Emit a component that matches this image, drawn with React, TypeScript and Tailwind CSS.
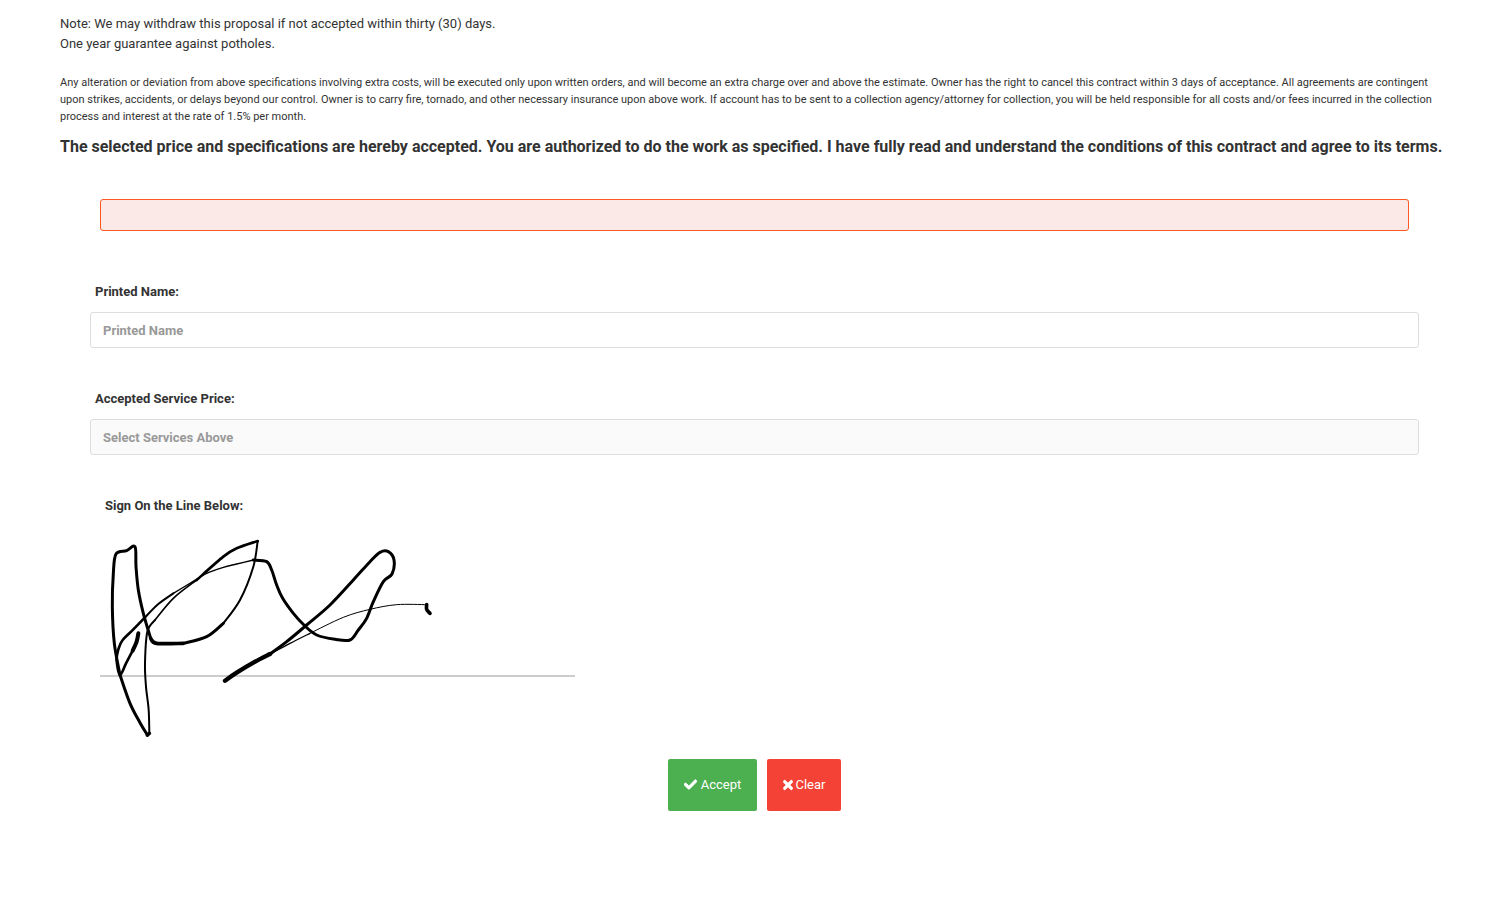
import { FaCheck, FaTimes } from "react-icons/fa";

// signature strokes, coords are 3x page px (svg box starts at 90,530)
type Stroke = { w: number; pts: number[][] };

const STROKES: Stroke[] = [
  { w: 12, pts: [[145, 310], [140, 335], [128, 362]] },
  { w: 8, pts: [[128, 362], [108, 400], [90, 435], [80, 390], [86, 355], [98, 330], [130, 298], [165, 262]] },
  { w: 6, pts: [[165, 262], [205, 222], [250, 190]] },
  { w: 4, pts: [[250, 190], [300, 160], [350, 130], [400, 112], [440, 102], [490, 90]] },
  { w: 9, pts: [[490, 90], [530, 95], [545, 120], [560, 165], [578, 205], [610, 250], [645, 288], [680, 315], [735, 328], [780, 330], [805, 300], [830, 265], [850, 215], [880, 155], [906, 132], [912, 90], [895, 65], [870, 67], [840, 95], [790, 150], [720, 225], [650, 285], [590, 335], [540, 372]] },
  { w: 13, pts: [[540, 372], [490, 398], [440, 428], [405, 452]] },
  { w: 4, pts: [[540, 372], [600, 340], [660, 310]] },
  { w: 3, pts: [[660, 310], [760, 262], [840, 238], [920, 224], [1010, 224]] },
  { w: 11, pts: [[1010, 224], [1010, 238], [1020, 250]] },
  { w: 9, pts: [[90, 435], [120, 520], [150, 578], [172, 615]] },
  { w: 11, pts: [[172, 615], [178, 610]] },
  { w: 6, pts: [[178, 610], [176, 540], [168, 470], [165, 400], [172, 305], [195, 270]] },
  { w: 5, pts: [[195, 270], [250, 205], [320, 150]] },
  { w: 8, pts: [[320, 150], [400, 80], [440, 55], [503, 33]] },
  { w: 6, pts: [[503, 33], [490, 110], [450, 210], [400, 280]] },
  { w: 9, pts: [[400, 280], [350, 320], [280, 340]] },
  { w: 11, pts: [[280, 340], [200, 340], [182, 325]] },
  { w: 9, pts: [[182, 325], [160, 250], [145, 180], [138, 110], [135, 50], [110, 62], [78, 72], [70, 130], [67, 230], [73, 340], [90, 435]] },
];

// catmull-rom through the points
function smooth(pts: number[][]) {
  let d = `M${pts[0][0]} ${pts[0][1]}`;
  for (let i = 0; i < pts.length - 1; i++) {
    const p0 = pts[i - 1] || pts[i];
    const p1 = pts[i];
    const p2 = pts[i + 1];
    const p3 = pts[i + 2] || p2;
    const c1x = p1[0] + (p2[0] - p0[0]) / 6;
    const c1y = p1[1] + (p2[1] - p0[1]) / 6;
    const c2x = p2[0] - (p3[0] - p1[0]) / 6;
    const c2y = p2[1] - (p3[1] - p1[1]) / 6;
    d += ` C${c1x} ${c1y} ${c2x} ${c2y} ${p2[0]} ${p2[1]}`;
  }
  return d;
}

function Signature() {
  return (
    <svg
      width="360"
      height="215"
      viewBox="0 0 1080 645"
      fill="none"
      className="absolute left-[-10px] top-[-145px]"
    >
      {STROKES.map((s, i) => (
        <path
          key={i}
          d={smooth(s.pts)}
          stroke="#000"
          strokeWidth={s.w}
          strokeLinecap="round"
          strokeLinejoin="round"
        />
      ))}
    </svg>
  );
}

export default function App() {
  return (
    <div className="h-[916px] bg-white px-[60px] pt-[14px] font-['Roboto',sans-serif] text-[#333]">
      <p className="text-[13px] leading-[20px]">
        Note: We may withdraw this proposal if not accepted within thirty (30) days.
      </p>
      <p className="text-[13px] leading-[20px]">One year guarantee against potholes.</p>

      <p className="mt-[20px] text-[10.993px] leading-[17px]">
        Any alteration or deviation from above specifications involving extra costs, will be executed only upon written orders, and will become an extra charge over and above the estimate. Owner has the right to cancel this contract within 3 days of acceptance. All agreements are contingent upon strikes, accidents, or delays beyond our control. Owner is to carry fire, tornado, and other necessary insurance upon above work. If account has to be sent to a collection agency/attorney for collection, you will be held responsible for all costs and/or fees incurred in the collection process and interest at the rate of 1.5% per month.
      </p>
      <p className="mt-[10px] whitespace-nowrap text-[16.015px] font-bold leading-[24px]">
        The selected price and specifications are hereby accepted. You are authorized to do the work as specified. I have fully read and understand the conditions of this contract and agree to its terms.
      </p>

      <div className="mx-[40px] mt-[40px] h-[32px] rounded-[3px] border border-[#ff5722] bg-[#fbe9e7]" />

      <div className="mx-[30px]">
        <label className="mt-[52px] block px-[5px] text-[13px] font-bold leading-[18px]">Printed Name:</label>
        <input
          placeholder="Printed Name"
          className="mt-[11px] block h-[36px] w-full rounded-[3px] border border-[#ddd] bg-white px-[12px] text-[13px] font-bold outline-none placeholder:text-[#999]"
        />

        <label className="mt-[42px] block px-[5px] text-[13px] font-bold leading-[18px]">Accepted Service Price:</label>
        <div className="mt-[11px] flex h-[36px] items-center rounded-[3px] border border-[#ddd] bg-[#fafafa] px-[12px] pt-[1px] text-[13px] font-bold text-[#999]">
          Select Services Above
        </div>

        <label className="mt-[42px] block px-[15px] text-[13px] font-bold leading-[18px]">Sign On the Line Below:</label>
        <div className="relative ml-[10px] mt-[160px] h-[2px] w-[475px] bg-[#ccc]">
          <Signature />
        </div>
      </div>

      <div className="mt-[82px] flex justify-center gap-[10px]">
        <button className="flex h-[52px] w-[89px] items-center justify-center gap-[4px] rounded-[2px] bg-[#4caf50] text-[13px] text-white">
          <FaCheck className="mb-[1px]" size={13} stroke="currentColor" strokeWidth={30} />
          Accept
        </button>
        <button className="flex h-[52px] w-[74px] items-center justify-center gap-[3px] rounded-[2px] bg-[#f44336] text-[13px] text-white">
          <FaTimes className="mb-[1px] h-[14px] w-[10px]" stroke="currentColor" strokeWidth={30} />
          Clear
        </button>
      </div>
    </div>
  );
}
